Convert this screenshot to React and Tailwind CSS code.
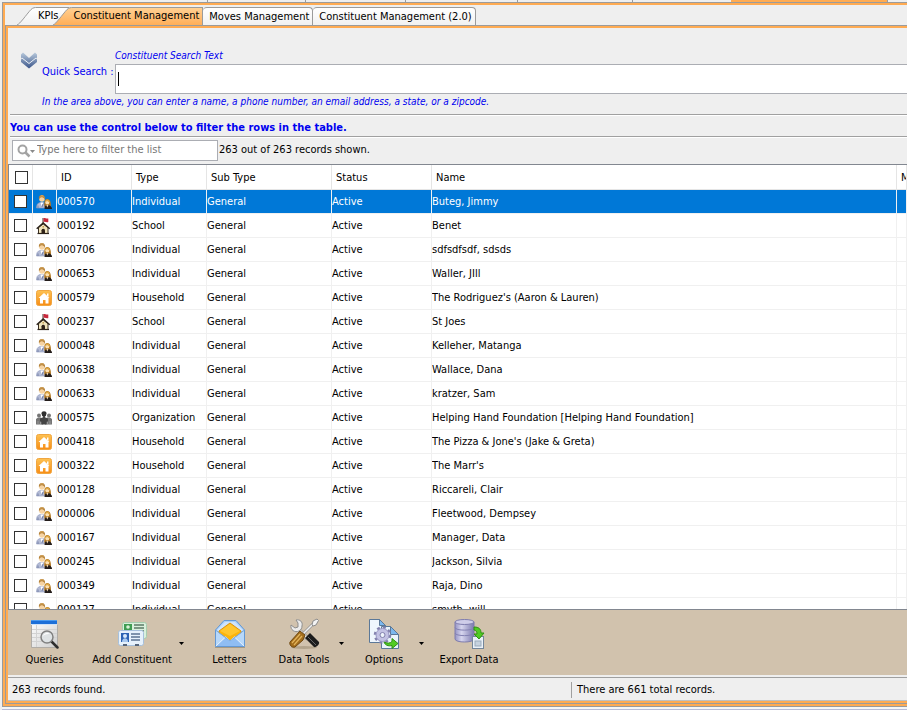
import { useState } from 'react';

const RECORDS = [
  { id: '000570', type: 'Individual', name: 'Buteg, Jimmy' },
  { id: '000192', type: 'School', name: 'Benet' },
  { id: '000706', type: 'Individual', name: 'sdfsdfsdf, sdsds' },
  { id: '000653', type: 'Individual', name: 'Waller, JIll' },
  { id: '000579', type: 'Household', name: "The Rodriguez's (Aaron & Lauren)" },
  { id: '000237', type: 'School', name: 'St Joes' },
  { id: '000048', type: 'Individual', name: 'Kelleher, Matanga' },
  { id: '000638', type: 'Individual', name: 'Wallace, Dana' },
  { id: '000633', type: 'Individual', name: 'kratzer, Sam' },
  { id: '000575', type: 'Organization', name: 'Helping Hand Foundation [Helping Hand Foundation]' },
  { id: '000418', type: 'Household', name: "The Pizza & Jone's (Jake & Greta)" },
  { id: '000322', type: 'Household', name: "The Marr's" },
  { id: '000128', type: 'Individual', name: 'Riccareli, Clair' },
  { id: '000006', type: 'Individual', name: 'Fleetwood, Dempsey' },
  { id: '000167', type: 'Individual', name: 'Manager, Data' },
  { id: '000245', type: 'Individual', name: 'Jackson, Silvia' },
  { id: '000349', type: 'Individual', name: 'Raja, Dino' },
  { id: '000127', type: 'Individual', name: 'smyth, will' },
];

// Row icons
function IndividualIcon() {
  return (
    <svg width="16" height="16" viewBox="0 0 16 16" className="block">
      <path d="M.500 14c0-3 1-5 3.500-5.500h3.500L9 14z" fill="#b4bcd6" stroke="#8c96b8" strokeWidth=".600" />
      <path d="M4.500 8.500 5.500 12l2-3.500z" fill="#fff" />
      <path d="M2 14v-2.500M6 13l1-3" stroke="#6a76a0" strokeWidth=".800" />
      <circle cx="6" cy="5" r="2.800" fill="#f6d3a2" />
      <path d="M3 5.500C2.500 2 4 1 6 1s3.500 1.500 3 5C8.500 4 7 3.500 6 3.200 4.500 3 3.500 4 3 5.500z" fill="#b5823a" />
      <path d="M4.500 2.200c1-.6 2-.6 3 0" stroke="#e0b368" fill="none" />
      <path d="M8.500 13c-.500-4-.500-8 2.800-8s3.700 4 3.700 8z" fill="#b17823" />
      <circle cx="11.300" cy="8.500" r="2" fill="#fce0b3" />
      <path d="M8.500 15c0-2.500 1-4 3-4s4.500 1.500 4.500 4z" fill="#241d1b" />
      <path d="m10.300 11 1 2.500 1.200-2.500z" fill="#f7d9ac" />
      <path d="M9 8c.3-2 1.300-2.500 2.500-2.500S14 7 14 8.500C12.500 8 11.500 7.500 11.200 6.800 10.800 7.500 10 8 9 8z" fill="#dfa844" />
    </svg>
  );
}

function SchoolIcon() {
  return (
    <svg width="15" height="18" viewBox="0 0 15 18" className="block">
      <path d="M6.500 1h1v6h-1z" fill="#4a3c30" />
      <path d="M7.500 1.200c1.500-.8 2.500 1 4.800.200V5c-2 .8-3-.8-4.800 0z" fill="#c8283c" />
      <path d="M2.500 10.500 7.200 7l4.800 3.500V16.500h-9.500z" fill="#f1e4bb" stroke="#3a2f22" />
      <path d="M.700 11.800 7.200 6l6.500 5.800" fill="none" stroke="#2d241b" strokeWidth="1.500" />
      <path d="M5.500 16.500v-3.300a1.800 1.800 0 0 1 3.500 0v3.300z" fill="#2f2218" />
      <path d="M1.500 16.500h11.500" stroke="#2d241b" strokeWidth="1.200" />
      <path d="M6.500 9h1.500v1.500H6.500z" fill="#c29b52" />
    </svg>
  );
}

function HouseholdIcon() {
  return (
    <svg width="16" height="16" viewBox="0 0 16 16" className="block">
      <defs>
        <linearGradient id="house" x1="0" y1="0" x2="0" y2="1">
          <stop offset="0" stopColor="#fdc253" />
          <stop offset="1" stopColor="#f78d16" />
        </linearGradient>
      </defs>
      <rect x=".500" y=".500" width="15" height="15" rx="2" fill="url(#house)" stroke="#f0a640" />
      <path d="m8 3 5.500 5H12.500v5.500H9.500V10h-2.500v3.500H4V8H2.500z" fill="#fff" />
      <path d="M11 3.500h1.500V7L11 5.500z" fill="#fff" />
    </svg>
  );
}

function OrganizationIcon() {
  return (
    <svg width="16" height="16" viewBox="0 0 16 16" className="block">
      <g fill="#757575">
        <circle cx="3" cy="5.500" r="2" />
        <circle cx="13" cy="5.500" r="2" />
        <path d="M0 14.500V9l2-1.500h3L7 9.500v5zM16 14.500V9l-2-1.500h-3L9 9.500v5z" />
      </g>
      <path d="M5.500 3.500C5.500 2 6.500 1.200 8 1.200s2.500.8 2.500 2.300L9.800 6H6.200z" fill="#2f2f2f" />
      <path d="M6.800 6h2.400v1.500L12 8.500V11l-1.500 1v2.500h-5V12L4 11V8.500l2.800-1z" fill="#444" />
      <path d="M4.500 14.500V12M11.500 14.500V12M2 14.500V11M14 14.500V11" stroke="#a0a0a0" strokeWidth=".800" />
    </svg>
  );
}

const ROW_ICONS = {
  Individual: IndividualIcon,
  School: SchoolIcon,
  Household: HouseholdIcon,
  Organization: OrganizationIcon,
};

// Toolbar icons
function QueriesIcon() {
  return (
    <svg width="30" height="30" viewBox="0 0 30 30">
      <defs>
        <linearGradient id="sheet" x1="0" y1="0" x2="1" y2="1">
          <stop offset="0" stopColor="#fff" />
          <stop offset="1" stopColor="#cfcfcf" />
        </linearGradient>
      </defs>
      <rect x="1" y="1" width="26" height="27" fill="url(#sheet)" />
      <path d="M1 10.500h26M1 14.500h26M1 18.500h26M1 22.500h26M6.500 5v23" stroke="#d2d2d2" />
      <rect x="1" y="1" width="26" height="4" fill="#1c6fd8" />
      <path d="M1 1h26v1H1z" fill="#4b9bf0" />
      <path d="M1 5h26v1H1z" fill="#cfe2f8" />
      <path d="M1.500 6v22.500h26V6" fill="none" stroke="#b0aca6" />
      <path d="m21.500 22.500 6 6" stroke="#2e2e2e" strokeWidth="2.500" strokeLinecap="round" />
      <circle cx="17" cy="18" r="6" fill="#dfe3e5" fillOpacity=".9" stroke="#808080" strokeWidth="1.500" />
      <path d="M13 17c1-3 4-4 7-2-2 0-5 0-7 2z" fill="#fff" />
    </svg>
  );
}

function AddConstituentIcon() {
  return (
    <svg width="30" height="30" viewBox="0 0 30 30">
      <rect x="5.500" y="3.500" width="24" height="16" rx="2" fill="#d9f0dc" stroke="#a5cdae" />
      <rect x="7" y="5" width="8" height="7" fill="#3f9c52" />
      <circle cx="11" cy="8" r="1.800" fill="#d8f1d8" />
      <path d="M17 6h10M17 9h10M23 12h4" stroke="#5c7a66" strokeWidth="1.500" />
      <rect x="1.500" y="11.500" width="25" height="15" rx="2" fill="#e6f1fc" stroke="#a6c0dc" />
      <rect x="4" y="14" width="8" height="9" fill="#2c62b4" />
      <circle cx="8" cy="17" r="2" fill="#d9e9fb" />
      <path d="M5 23c0-5 6-5 6 0z" fill="#a9c9ef" />
      <path d="M14 15h9M14 18h9M14 21h9" stroke="#5c7391" strokeWidth="1.500" />
      <path d="M6 26h4M18 26h4" stroke="#56657a" strokeWidth="2" />
    </svg>
  );
}

function LettersIcon() {
  return (
    <svg width="32" height="30" viewBox="0 0 32 30">
      <path d="M1 28.500h30" stroke="#a69a84" />
      <path d="M1.500 11 10 1.500h12L30.500 11v16.500h-29z" fill="#a8cff8" stroke="#6398d4" />
      <path d="M3 11 11 3h10l8 8-13 11z" fill="#cfe4fb" />
      <path d="m5 12 11-8 11 8v2l-11 8-11-8z" fill="#fbb40c" stroke="#dc9410" />
      <path d="m6 12 10-7 10 7-10 5z" fill="#ffc62e" />
      <path d="m2 27 9.500-9 4.500 4 4.500-4 9.500 9z" fill="#8fbdf3" />
      <path d="M2 12v15l9.500-8.500zM30 12v15l-9.500-8.500z" fill="#b7d8fa" />
      <path d="m2 27 9.500-9 4.500 4 4.500-4 9.500 9" fill="none" stroke="#e5f1fe" />
      <path d="M1.500 11 16 22l14.500-11" fill="none" stroke="#76a8df" />
    </svg>
  );
}

function DataToolsIcon() {
  return (
    <svg width="32" height="32" viewBox="0 0 32 32">
      <ellipse cx="16" cy="29.500" rx="13" ry="1.500" fill="#b3a48c" />
      <path d="M12 13 20 21" stroke="#9a9a9a" strokeWidth="4" />
      <path d="M12 13 20 21" stroke="#e4e4e4" strokeWidth="2.500" />
      <path d="M8 2c4-1 7 2 6 6 0 2-1 4-3 5-4 2-9-1-8-6l4 3 3-1 0-4z" fill="#ececec" stroke="#8d8d8d" />
      <path d="m17 20 5-5 9 9c1 2-3 6-5 5z" fill="#1b1b1b" />
      <path d="m20 19 8 8" stroke="#666" />
      <path d="M15 16 25 6" stroke="#999" strokeWidth="3" />
      <path d="M15 16 25 6" stroke="#f1f1f1" strokeWidth="1.500" />
      <path d="m24 7 1-4 4-2 1.500 1.500L28 7l-3 1z" fill="#f4f4f4" stroke="#8d8d8d" />
      <path d="m12 13 5 4-2 5-8 7c-3 1-6-2-5-5z" fill="#a36d1c" stroke="#6d4710" />
      <path d="m12 16-8 9M14 18l-8 9" stroke="#e3b55c" strokeWidth="1.200" />
    </svg>
  );
}

function OptionsIcon() {
  return (
    <svg width="32" height="32" viewBox="0 0 32 32">
      <path d="M1.500 1.500h10l6 6v17h-16z" fill="#eff6fd" stroke="#5b7898" />
      <path d="M11.500 1.500v6h6z" fill="#7cb8ee" stroke="#5b7898" />
      <path d="M13.500 8.500h9l8 8v14h-17z" fill="#eaf4fb" stroke="#5b7898" />
      <path d="M22.500 8.500v8h8z" fill="#7cb8ee" stroke="#5b7898" />
      <circle cx="14.500" cy="17" r="7.500" fill="none" stroke="#8280ad" strokeWidth="2.500" strokeDasharray="2.950 2.950" />
      <circle cx="14.500" cy="17" r="6.500" fill="#c3c2e4" stroke="#9a98c4" />
      <circle cx="14.500" cy="17" r="2.500" fill="#eef4fb" stroke="#8280ad" />
      <path d="M16 24c3 1.500 6 1.500 8-.500V20.500l6 5-6 5V27.500c-4 1-7-.500-8-3.500z" fill="#52cc22" stroke="#2f8f12" />
    </svg>
  );
}

function ExportDataIcon() {
  return (
    <svg width="32" height="32" viewBox="0 0 32 32">
      <defs>
        <linearGradient id="cylinder" x1="0" y1="0" x2="1" y2="0">
          <stop offset="0" stopColor="#9694c4" />
          <stop offset=".350" stopColor="#d6d5ee" />
          <stop offset="1" stopColor="#7b79ae" />
        </linearGradient>
      </defs>
      <path d="M2 4v17c0 4 19 4 19 0V4z" fill="url(#cylinder)" stroke="#7f7dae" />
      <path d="M2 9.500c0 3.500 19 3.500 19 0M2 15c0 3.500 19 3.500 19 0" fill="none" stroke="#8482b3" />
      <ellipse cx="11.500" cy="4" rx="9.500" ry="2.500" fill="#cfcde9" stroke="#7f7dae" />
      <rect x="19.500" y="18.500" width="11" height="12" fill="#eaf1f8" stroke="#73869a" />
      <rect x="22" y="23" width="6" height="5" fill="#c6d2de" stroke="#9aabbb" />
      <path d="M21 9c5 0 7 2 7 6h3L26 21l-5-5h3c0-2-1-4-3-4z" fill="#4fcb22" stroke="#2f8f12" />
    </svg>
  );
}

function ToolButton({ icon: Icon, label, className }) {
  return (
    <button type="button" className={`flex flex-col items-center ${className}`}>
      <span className="flex h-8 items-center"><Icon /></span>
      <span className="mt-[2px] leading-4 whitespace-nowrap">{label}</span>
    </button>
  );
}

function MenuArrow({ label }) {
  return (
    <button type="button" aria-label={label} className="flex w-[15px] items-center justify-center">
      <svg width="5" height="3" viewBox="0 0 5 3"><path d="M0 0h5L2.500 3z" fill="#000" /></svg>
    </button>
  );
}

// Slanted left edge of a tab
function TabSlant({ selected }) {
  return (
    <svg width="20" height="18" viewBox="0 0 20 18" className="block shrink-0">
      <defs>
        <linearGradient id="tabOn" x1="0" y1="0" x2="0" y2="1">
          <stop offset="0" stopColor="#ffd093" />
          <stop offset="1" stopColor="#ffae57" />
        </linearGradient>
        <linearGradient id="tabOff" x1="0" y1="0" x2="0" y2="1">
          <stop offset="0" stopColor="#fff" />
          <stop offset="1" stopColor="#f1f1f1" />
        </linearGradient>
      </defs>
      <path d="M0 18C3 17 9 8 14 2.500 16 .500 18 .500 20 .500V18z" fill={selected ? 'url(#tabOn)' : 'url(#tabOff)'} />
      <path d="M0 18C3 17 9 8 14 2.500 16 .500 18 .500 20 .500" fill="none" stroke="#9b9b9b" />
    </svg>
  );
}

function Tabs() {
  const plain = 'h-[18px] rounded-t-sm border border-b-0 border-l-0 border-[#9b9b9b] bg-linear-to-b from-white to-[#f1f1f1] pl-[6px] pr-[3px]';
  return (
    <div role="tablist" className="flex h-5 items-end pl-3 leading-4 whitespace-nowrap">
      <button type="button" role="tab" aria-selected="false" className="flex">
        <TabSlant />
        <span className="h-[18px] border-t border-[#9b9b9b] bg-linear-to-b from-white to-[#f1f1f1] pl-px pr-[10px]">KPIs</span>
      </button>
      <button type="button" role="tab" aria-selected="true" className="relative -ml-4 flex">
        <TabSlant selected />
        <span className="h-[18px] border-t border-r border-[#9b9b9b] bg-linear-to-b from-[#ffd093] to-[#ffae57] pr-[3px] pl-px">
          Constituent Management
        </span>
      </button>
      <button type="button" role="tab" aria-selected="false" className={plain}>Moves Management</button>
      <button type="button" role="tab" aria-selected="false" className={plain}>Constituent Management (2.0)</button>
    </div>
  );
}

function SearchPanel() {
  const [query, setQuery] = useState('');
  return (
    <section className="flex pt-5">
      <button type="button" aria-label="Collapse search" className="mt-[2px] ml-3 h-5 w-[18px] shrink-0">
        <svg width="18" height="18" viewBox="0 0 18 18">
          <defs>
            <linearGradient id="chevrons" x1="0" y1="0" x2="0" y2="1">
              <stop offset="0" stopColor="#b9cadc" />
              <stop offset="1" stopColor="#3a558a" />
            </linearGradient>
          </defs>
          <path
            d="m1 3.500 2-2L9 7l6-5.500 2 2v3l-1 1 1 1V11l-8 6.500L1 11V8.500l1-1-1-1z"
            fill="url(#chevrons)"
          />
          <path d="m2 7 7 5.500L16 7" fill="none" stroke="#eef2f7" strokeWidth="1" />
        </svg>
      </button>
      <div className="min-w-0 flex-1 pl-1 text-[#0000f0]">
        <div className="flex">
          <label htmlFor="quick" className="w-[72px] shrink-0 pt-4 leading-4 whitespace-nowrap">Quick Search :</label>
          <div className="relative min-w-0 flex-1 pl-px">
            <div className="text-[10px] leading-4 italic">Constituent Search Text</div>
            <input
              id="quick"
              type="text"
              value={query}
              onChange={(e) => setQuery(e.target.value)}
              className="block h-[30px] w-full border border-r-0 border-[#abadb3] bg-white px-[2px] text-black outline-none"
            />
            {/* caret shown while the box is still empty */}
            {!query && <span className="pointer-events-none absolute bottom-2 left-1 h-[14px] w-px bg-black" />}
          </div>
        </div>
        <p className="text-[10px] leading-4 italic">
          In the area above, you can enter a name, a phone number, an email address, a state, or a zipcode.
        </p>
      </div>
    </section>
  );
}

function FilterBar({ filter, onFilter }) {
  return (
    <section className="mt-1">
      <h2 className="ml-[2px] border-y border-[#a0a0a0] pt-[5px] text-[11px] leading-4 font-bold text-[#0000f0] shadow-[0_1px_0_#fff,inset_0_1px_0_#fff]">
        You can use the control below to filter the rows in the table.
      </h2>
      <div className="flex h-[27px] items-center pl-1">
        <div className="flex h-[21px] w-[206px] items-center border border-[#abadb3] bg-white pl-1">
          <svg width="18" height="14" viewBox="0 0 18 14" className="shrink-0">
            <circle cx="5.500" cy="5.500" r="4" fill="none" stroke="#a3a3a3" strokeWidth="2" />
            <path d="m8.500 8.500 4 4" stroke="#a3a3a3" strokeWidth="2.500" />
            <path d="M13 6h5l-2.500 3z" fill="#8a8a8a" />
          </svg>
          <input
            type="text"
            aria-label="Filter the list"
            placeholder="Type here to filter the list"
            value={filter}
            onChange={(e) => onFilter(e.target.value)}
            className="min-w-0 flex-1 pl-[2px] outline-none placeholder:text-[#777]"
          />
        </div>
        <span className="pl-px whitespace-nowrap">263 out of 263 records shown.</span>
      </div>
    </section>
  );
}

function Check({ label }) {
  return (
    <input
      type="checkbox"
      aria-label={label}
      className="block size-[13px] appearance-none border border-[#333] bg-white checked:bg-[#333]"
    />
  );
}

function RecordsTable({ rows }) {
  const [selected, setSelected] = useState('000570');
  return (
    <div className="min-h-0 flex-1 overflow-hidden border-y border-l border-[#828790] bg-white">
      <table className="w-full table-fixed border-separate border-spacing-0 text-left whitespace-nowrap">
        <colgroup>
          <col className="w-6" />
          <col className="w-6" />
          <col className="w-[75px]" />
          <col className="w-[75px]" />
          <col className="w-[125px]" />
          <col className="w-[100px]" />
          <col className="w-[465px]" />
          <col />
        </colgroup>
        <thead>
          <tr className="h-[25px] [&>th]:border-r [&>th]:border-b [&>th]:border-[#e5e5e5] [&>th]:p-0 [&>th]:font-normal">
            <th className="overflow-hidden"><div className="pl-[6px]"><Check label="Select all" /></div></th>
            <th />
            {['ID', 'Type', 'Sub Type', 'Status', 'Name', 'M'].map((title) => (
              <th key={title} className="overflow-hidden"><div className="pt-[2px] pl-1">{title}</div></th>
            ))}
          </tr>
        </thead>
        <tbody>
          {rows.map((row) => {
            const Icon = ROW_ICONS[row.type];
            return (
              <tr
                key={row.id}
                onClick={() => setSelected(row.id)}
                className={`h-6 leading-4 [&>td]:overflow-hidden [&>td]:border-r [&>td]:border-b [&>td]:border-[#f0f0f0] [&>td]:p-0 ${
                  row.id === selected ? 'bg-[#0078d7] text-white' : ''
                }`}
              >
                <td><div className="pl-[5px]"><Check label={`Select ${row.id}`} /></div></td>
                <td><div className="flex h-[18px] items-center pl-[3px]"><Icon /></div></td>
                <td>{row.id}</td>
                <td>{row.type}</td>
                <td>General</td>
                <td>Active</td>
                <td>{row.name}</td>
                <td />
              </tr>
            );
          })}
        </tbody>
      </table>
    </div>
  );
}

function Toolbar() {
  return (
    <div className="flex gap-[5px] bg-[#d1c2ad] pt-2 pb-[7px]">
      <ToolButton icon={QueriesIcon} label="Queries" className="w-[77px] pr-1" />
      <div className="flex">
        <ToolButton icon={AddConstituentIcon} label="Add Constituent" className="w-[84px]" />
        <MenuArrow label="Add Constituent menu" />
      </div>
      <ToolButton icon={LettersIcon} label="Letters" className="w-[75px] pr-1" />
      <div className="flex">
        <ToolButton icon={DataToolsIcon} label="Data Tools" className="w-[60px]" />
        <MenuArrow label="Data Tools menu" />
      </div>
      <div className="flex">
        <ToolButton icon={OptionsIcon} label="Options" className="w-[60px]" />
        <MenuArrow label="Options menu" />
      </div>
      <ToolButton icon={ExportDataIcon} label="Export Data" className="w-[70px]" />
    </div>
  );
}

function StatusBar() {
  return (
    <div className="mt-[2px] flex h-6 items-center border-y border-t-[#a0a0a0] border-b-[#c0c0c0] pt-[2px]">
      <div className="w-[563px] pl-1">263 records found.</div>
      <div className="border-l border-[#a0a0a0] pl-[5px] leading-4">There are 661 total records.</div>
    </div>
  );
}

// Bottom edge of the tab strip that holds this window
function OuterTabs() {
  return (
    <div className="flex h-[2px] pl-[6px]">
      <div className="w-[200px] border-r border-[#9b9b9b]" />
      <div className="w-[98px] border-r border-[#9b9b9b]" />
      <div className="w-[100px] border-r border-[#9b9b9b]" />
      <div className="w-[112px] border-r border-[#9b9b9b]" />
      <div className="w-[115px] border-r border-[#9b9b9b]" />
      <div className="w-[98px]" />
      <div className="w-[156px] bg-[#ffab52]" />
      <div className="flex-1 border-l border-[#9b9b9b]" />
    </div>
  );
}

export default function App() {
  const [filter, setFilter] = useState('');
  const rows = RECORDS.filter((r) => `${r.id} ${r.type} ${r.name}`.toLowerCase().includes(filter.toLowerCase()));

  return (
    <div className="flex h-screen flex-col overflow-hidden bg-[#efefef] pl-[2px] font-['DejaVu_Sans_Condensed','DejaVu_Sans',sans-serif] text-[11px] text-black">
      <OuterTabs />
      <div className="flex min-h-0 flex-1 flex-col border-y border-l border-[#9b9b9b]">
        <div className="flex min-h-0 flex-1 flex-col border-y-2 border-l-2 border-[#ffab52]">
          <Tabs />
          <div className="flex min-h-0 flex-1 flex-col border-y border-l border-[#9b9b9b]">
            <div className="flex min-h-0 flex-1 flex-col border-y-2 border-l-2 border-[#ffab52]">
              <SearchPanel />
              <FilterBar filter={filter} onFilter={setFilter} />
              <RecordsTable rows={rows} />
              <Toolbar />
              <StatusBar />
            </div>
          </div>
        </div>
      </div>
      <div className="h-[3px] border-b border-[#b9bdd6] bg-[#f6f6f6]" />
    </div>
  );
}
